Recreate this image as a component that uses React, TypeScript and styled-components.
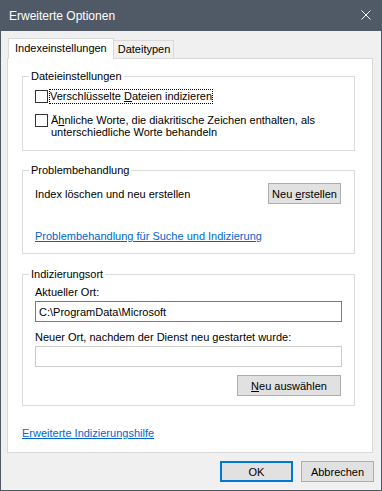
import styled, { createGlobalStyle } from 'styled-components';

const GlobalStyle = createGlobalStyle`
  html, body {
    margin: 0;
    padding: 0;
    background: #ffffff;
  }
  body {
    font-family: "Liberation Sans", Arial, sans-serif;
    font-size: 11px;
    color: #000000;
  }
  * {
    box-sizing: border-box;
  }
`;

const Window = styled.div`
  width: 382px;
  height: 491px;
  padding: 1px;
  background: #505a66;
  display: flex;
  flex-direction: column;
`;

const TitleBar = styled.div`
  height: 30px;
  display: flex;
  align-items: center;
  justify-content: space-between;
  padding: 0 10px 0 8px;
  color: #ffffff;
  font-size: 12px;
`;

const CloseButton = styled.div`
  width: 10px;
  height: 10px;
  display: flex;
  margin-top: -2px;
`;

const Body = styled.div`
  flex: 1;
  background: #f0f0f0;
  padding: 7px 8px 0 6px;
  display: flex;
  flex-direction: column;
`;

const TabStrip = styled.div`
  display: flex;
  align-items: flex-end;
  height: 20px;
  padding-left: 1px;
`;

const Tab = styled.div<{ $active?: boolean }>`
  position: relative;
  z-index: ${p => (p.$active ? 2 : 1)};
  height: ${p => (p.$active ? '21px' : '18px')};
  margin-bottom: ${p => (p.$active ? '-1px' : '0')};
  margin-left: ${p => (p.$active ? '0' : '-1px')};
  padding: ${p => (p.$active ? '2px 6px 0 6px' : '1px 3px 0 4px')};
  background: ${p => (p.$active ? '#ffffff' : '#f0f0f0')};
  border: 1px solid #d9d9d9;
  border-bottom: none;
  line-height: 15px;
  white-space: nowrap;
`;

const Panel = styled.div`
  height: 395px;
  background: #ffffff;
  border: 1px solid #d9d9d9;
  padding: 10px 17px 0 14px;
  display: flex;
  flex-direction: column;
`;

const Group = styled.fieldset<{ $gap?: number }>`
  margin: ${p => p.$gap ?? 0}px 0 0 0;
  padding: 0 12px;
  border: 1px solid #dcdcdc;
  min-width: 0;
`;

const Legend = styled.legend`
  margin-left: -6px;
  padding: 0 2px;
  line-height: 14px;
`;

const CheckRow = styled.div<{ $top: number }>`
  display: flex;
  align-items: flex-start;
  margin-top: ${p => p.$top}px;
`;

const CheckBox = styled.span`
  flex: none;
  width: 13px;
  height: 13px;
  border: 1px solid #333333;
  background: #ffffff;
  margin-top: 1px;
`;

const CheckLabel = styled.span<{ $focused?: boolean; $lh: number }>`
  margin-left: 1px;
  border: 1px ${p => (p.$focused ? 'dotted #000000' : 'solid transparent')};
  line-height: ${p => p.$lh}px;
  padding-left: ${p => (p.$focused ? 0 : 1)}px;
`;

const ActionRow = styled.div`
  display: flex;
  align-items: center;
  justify-content: space-between;
  margin-top: 6px;
  padding-right: 1px;
`;

const Text = styled.div<{ $top?: number }>`
  line-height: 15px;
  margin-top: ${p => p.$top ?? 0}px;
`;

const Link = styled.a<{ $top?: number; $bottom?: number }>`
  display: block;
  color: #0066cc;
  text-decoration: underline;
  line-height: 15px;
  margin-top: ${p => p.$top ?? 0}px;
  margin-bottom: ${p => p.$bottom ?? 0}px;
  cursor: pointer;
`;

const Button = styled.button<{ $width?: number; $default?: boolean }>`
  width: ${p => p.$width ?? 73}px;
  height: 21px;
  padding: 0;
  font-family: inherit;
  font-size: 11px;
  color: #000000;
  background: #e1e1e1;
  border: ${p => (p.$default ? '2px solid #0078d7' : '1px solid #adadad')};
  display: flex;
  align-items: center;
  justify-content: center;
`;

const RightRow = styled.div<{ $top: number; $bottom: number }>`
  display: flex;
  justify-content: flex-end;
  margin-top: ${p => p.$top}px;
  margin-bottom: ${p => p.$bottom}px;
  padding-right: 1px;
`;

const Field = styled.div<{ $disabled?: boolean }>`
  height: 21px;
  margin-top: 1px;
  border: 1px solid ${p => (p.$disabled ? '#cccccc' : '#7a7a7a')};
  background: #ffffff;
  padding-left: 3px;
  display: flex;
  align-items: center;
`;

const Footer = styled.div`
  display: flex;
  justify-content: flex-end;
  gap: 8px;
  margin-top: 8px;
  margin-right: -1px;
`;

const CloseIcon = () => (
  <svg width="10" height="10" viewBox="0 0 10 10">
    <path d="M0.5 0.5 L9.5 9.5 M9.5 0.5 L0.5 9.5" stroke="#ffffff" strokeWidth="1" fill="none" />
  </svg>
);

export default function App() {
  return (
    <>
      <GlobalStyle />
      <Window>
        <TitleBar>
          <span>Erweiterte Optionen</span>
          <CloseButton>
            <CloseIcon />
          </CloseButton>
        </TitleBar>
        <Body>
          <TabStrip>
            <Tab $active>Indexeinstellungen</Tab>
            <Tab>Dateitypen</Tab>
          </TabStrip>
          <Panel>
            <Group>
              <Legend>Dateieinstellungen</Legend>
              <CheckRow $top={6}>
                <CheckBox />
                <CheckLabel $focused $lh={13}>
                  Verschlüsselte <u>D</u>ateien indizieren
                </CheckLabel>
              </CheckRow>
              <CheckRow $top={9}>
                <CheckBox />
                <CheckLabel $lh={12}>
                  Ä<u>h</u>nliche Worte, die diakritische Zeichen enthalten, als
                  <br />
                  unterschiedliche Worte behandeln
                </CheckLabel>
              </CheckRow>
              <div style={{ height: 11 }} />
            </Group>

            <Group $gap={12}>
              <Legend>Problembehandlung</Legend>
              <ActionRow>
                <span>Index löschen und neu erstellen</span>
                <Button>
                  Neu&nbsp;<u>e</u>rstellen
                </Button>
              </ActionRow>
              <Link $top={25} $bottom={9}>
                Problembehandlung für Suche und Indizierung
              </Link>
            </Group>

            <Group $gap={13}>
              <Legend>Indizierungsort</Legend>
              <Text $top={4}>Aktueller Ort:</Text>
              <Field>C:\ProgramData\Microsoft</Field>
              <Text $top={8}>Neuer Ort, nachdem der Dienst neu gestartet wurde:</Text>
              <Field $disabled />
              <RightRow $top={8} $bottom={9}>
                <Button $width={104}>
                  <u>N</u>eu auswählen
                </Button>
              </RightRow>
            </Group>

            <Link $top={20}>Erweiterte Indizierungshilfe</Link>
          </Panel>
          <Footer>
            <Button $default>OK</Button>
            <Button>Abbrechen</Button>
          </Footer>
        </Body>
      </Window>
    </>
  );
}
